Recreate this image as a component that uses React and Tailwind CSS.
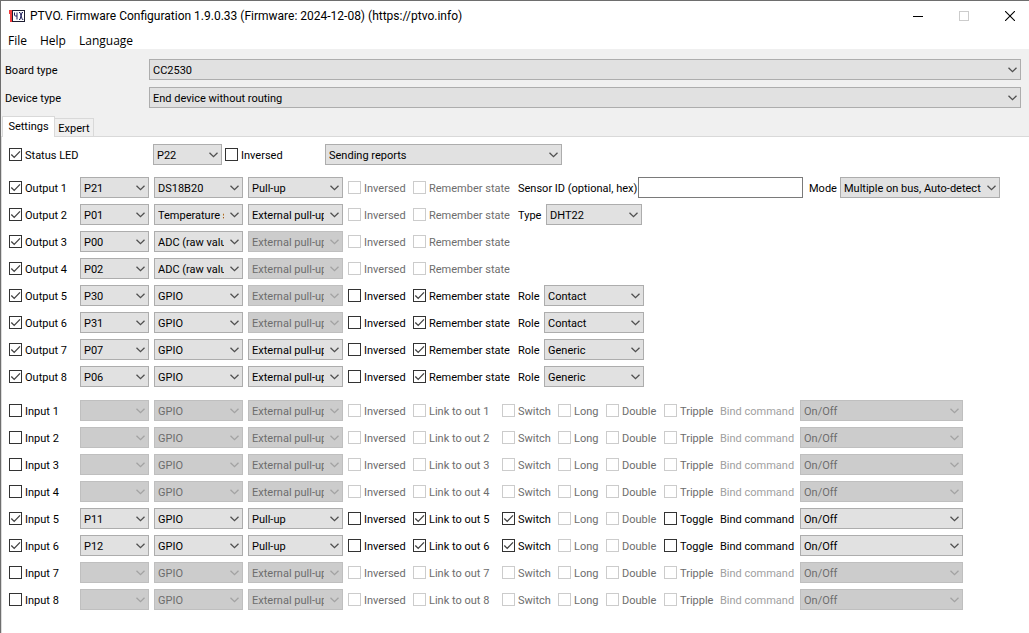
import { useId } from 'react'
import clsx from 'clsx'

const outputs = [
  { pin: 'P21', mode: 'DS18B20', pull: 'Pull-up', extra: 'sensor' },
  { pin: 'P01', mode: 'Temperature sensor', pull: 'External pull-up', extra: 'type' },
  { pin: 'P00', mode: 'ADC (raw value)', pull: 'External pull-up', pullOff: true },
  { pin: 'P02', mode: 'ADC (raw value)', pull: 'External pull-up', pullOff: true },
  { pin: 'P30', mode: 'GPIO', pull: 'External pull-up', pullOff: true, role: 'Contact' },
  { pin: 'P31', mode: 'GPIO', pull: 'External pull-up', pullOff: true, role: 'Contact' },
  { pin: 'P07', mode: 'GPIO', pull: 'External pull-up', role: 'Generic' },
  { pin: 'P06', mode: 'GPIO', pull: 'External pull-up', role: 'Generic' },
]

// pin of each input, empty when the input is off
const inputs = ['', '', '', '', 'P11', 'P12', '', '']

function Select({ value, label, id, disabled, className }) {
  return (
    <span className={clsx('relative block h-[21px] shrink-0', className)}>
      <select
        id={id}
        aria-label={label}
        disabled={disabled}
        defaultValue={value}
        className="block h-full w-full appearance-none overflow-hidden rounded-none border border-[#adadad] bg-[#e1e1e1] pt-px pr-[18px] pl-[3px] text-black opacity-100 disabled:border-[#bfbfbf] disabled:bg-[#cccccc] disabled:text-[#6d6d6d]"
      >
        <option>{value}</option>
      </select>
      <svg
        viewBox="0 0 9 6"
        className={clsx(
          'pointer-events-none absolute top-2 right-1 h-[6px] w-[9px]',
          disabled ? 'text-[#a3a3a3]' : 'text-[#505050]',
        )}
      >
        <path d="M0.5 0.7 4.5 4.7 8.5 0.7" fill="none" stroke="currentColor" strokeWidth="1.3" />
      </svg>
    </span>
  )
}

function Check({ label, checked, disabled, className }) {
  return (
    <label
      className={clsx(
        'flex shrink-0 items-center gap-[3px] whitespace-nowrap',
        disabled ? 'text-[#6d6d6d]' : 'text-black',
        className,
      )}
    >
      <span className="relative block size-[13px] shrink-0">
        <input
          type="checkbox"
          defaultChecked={checked}
          disabled={disabled}
          className="peer block size-[13px] appearance-none border border-[#333333] bg-white disabled:border-[#cccccc]"
        />
        <svg viewBox="0 0 13 13" className="pointer-events-none absolute inset-0 hidden size-[13px] peer-checked:block">
          <path d="M2.3 6.5 5.2 9.4 11 3.4" fill="none" stroke="#404040" strokeWidth="1.3" />
        </svg>
      </span>
      <span className="pt-px">{label}</span>
    </label>
  )
}

function Field({ label, value, labelWidth, width }) {
  const id = useId()
  return (
    <div className="flex items-center">
      <label htmlFor={id} className={clsx('shrink-0 pt-px whitespace-nowrap', labelWidth)}>{label}</label>
      <Select id={id} value={value} className={width} />
    </div>
  )
}

function PinSelects({ name, pin, pinOff, mode, modeOff, pull, pullOff }) {
  return (
    <div className="flex gap-[5px]">
      <Select label={`${name} pin`} value={pin} disabled={pinOff} className="w-[69px]" />
      <Select label={`${name} mode`} value={mode} disabled={modeOff} className="w-[89px]" />
      <Select label={`${name} pull`} value={pull} disabled={pullOff} className="w-[95px]" />
    </div>
  )
}

function OutputRow({ index, pin, mode, pull, pullOff, role, extra }) {
  const name = `Output ${index}`
  const sensorId = useId()
  return (
    <div className="flex h-[21px] items-center">
      <Check label={name} checked className="w-[71px]" />
      <PinSelects name={name} pin={pin} mode={mode} pull={pull} pullOff={pullOff} />
      <Check label="Inversed" disabled={!role} className="ml-[5px] w-[65px]" />
      <Check label="Remember state" checked={Boolean(role)} disabled={!role} className="w-[105px]" />
      {role && <Field label="Role" value={role} labelWidth="w-[26px]" width="w-[100px]" />}
      {extra === 'type' && <Field label="Type" value="DHT22" labelWidth="w-[28px]" width="w-[96px]" />}
      {extra === 'sensor' && (
        <>
          <label htmlFor={sensorId} className="w-[120px] shrink-0 pt-px whitespace-nowrap">
            Sensor ID (optional, hex)
          </label>
          <input
            id={sensorId}
            type="text"
            className="mr-[6px] h-[21px] w-[165px] border border-[#7a7a7a] bg-white px-1"
          />
          <Field label="Mode" value="Multiple on bus, Auto-detect" labelWidth="w-[31px]" width="w-[160px]" />
        </>
      )}
    </div>
  )
}

function InputRow({ index, pin }) {
  const name = `Input ${index}`
  const off = !pin
  const bindId = useId()
  return (
    <div className="flex h-[21px] items-center">
      <Check label={name} checked={!off} className="w-[71px]" />
      <PinSelects
        name={name}
        pin={pin}
        pinOff={off}
        mode="GPIO"
        modeOff={off}
        pull={off ? 'External pull-up' : 'Pull-up'}
        pullOff={off}
      />
      <Check label="Inversed" disabled={off} className="ml-[5px] w-[65px]" />
      <Check label={`Link to out ${index}`} checked={!off} disabled={off} className="w-[89px]" />
      <Check label="Switch" checked={!off} disabled={off} className="w-[56px]" />
      <Check label="Long" disabled className="w-[48px]" />
      <Check label="Double" disabled className="w-[58px]" />
      <Check label={off ? 'Tripple' : 'Toggle'} disabled={off} className="w-[56px]" />
      <label
        htmlFor={bindId}
        className={clsx('w-[80px] shrink-0 pt-px whitespace-nowrap', off ? 'text-[#a0a0a0]' : 'text-black')}
      >
        Bind command
      </label>
      <Select id={bindId} value="On/Off" disabled={off} className="w-[163px]" />
    </div>
  )
}

function BoardField({ label, value }) {
  const id = useId()
  return (
    <div className="flex items-center">
      <label htmlFor={id} className="w-36 shrink-0 pt-px">{label}</label>
      <Select id={id} value={value} className="min-w-0 flex-1" />
    </div>
  )
}

function Logo() {
  return (
    <svg viewBox="0 0 16 12" className="h-3 w-4 shrink-0">
      <path d="M0 0h3v12H1V4H0z" fill="#f23b3b" />
      <rect x="3.5" y="0.5" width="12" height="11" fill="#fff" stroke="#1c1c30" />
      <path
        d="M5.5 2.5v2.5q0 1 1.2 1H8M8 2.5v7M10 2.5h1l2.3 7h1M14 2.5h-1l-2 7h-1"
        fill="none"
        stroke="#1f1f5c"
      />
    </svg>
  )
}

function TitleBar() {
  return (
    <header className="flex h-[29px] items-center pl-2 text-[12px] text-black">
      <Logo />
      <h1 className="ml-[5px] flex-1 pt-px whitespace-nowrap">
        PTVO. Firmware Configuration 1.9.0.33 (Firmware: 2024-12-08) (https://ptvo.info)
      </h1>
      <div className="flex h-full gap-2">
        <button type="button" aria-label="Minimize" className="flex h-full w-[38px] items-center justify-center">
          <svg viewBox="0 0 10 10" className="size-[10px]"><path d="M0 5.5h10" stroke="#000" /></svg>
        </button>
        <button type="button" aria-label="Maximize" disabled className="flex h-full w-[38px] items-center justify-center">
          <svg viewBox="0 0 10 10" className="size-[10px]">
            <rect x="0.5" y="0.5" width="9" height="9" fill="none" stroke="#cccccc" />
          </svg>
        </button>
        <button type="button" aria-label="Close" className="flex h-full w-[38px] items-center justify-center">
          <svg viewBox="0 0 10 10" className="size-[10px]"><path d="M0 0 10 10M10 0 0 10" stroke="#000" strokeWidth="1.1" /></svg>
        </button>
      </div>
    </header>
  )
}

export default function App() {
  return (
    <div className="flex min-h-screen flex-col overflow-hidden border-t border-l border-[#6e6e6e] bg-white font-[Roboto,sans-serif] text-[11px] leading-[15px] text-black">
      <TitleBar />
      <nav className="flex h-[19px] items-center gap-[13px] pt-px pl-[7px] font-['Open_Sans',sans-serif] text-[12px]">
        <button type="button">File</button>
        <button type="button">Help</button>
        <button type="button">Language</button>
      </nav>

      <div className="bg-[#f0f0f0] pt-[10px]">
        <div className="flex flex-col gap-[7px] pr-2 pl-1">
          <BoardField label="Board type" value="CC2530" />
          <BoardField label="Device type" value="End device without routing" />
        </div>
        <div role="tablist" className="mt-2 flex items-end border-b border-[#d9d9d9] pl-px">
          <button
            type="button"
            role="tab"
            aria-selected="true"
            className="-mb-px h-[21px] w-[53px] border border-b-0 border-[#d9d9d9] bg-white pb-px"
          >
            Settings
          </button>
          <button
            type="button"
            role="tab"
            aria-selected="false"
            className="h-[18px] w-[39px] border border-b-0 border-l-0 border-[#d9d9d9] bg-[#f0f0f0] pt-px"
          >
            Expert
          </button>
        </div>
      </div>

      <main className="flex-1 border-l border-[#dcdcdc] pt-[7px] pl-[7px]">
        <div className="flex h-[21px] items-center">
          <Check label="Status LED" checked className="w-36" />
          <Select label="Status LED pin" value="P22" className="w-[69px]" />
          <Check label="Inversed" className="ml-[3px] w-[100px]" />
          <Select label="Status LED function" value="Sending reports" className="w-[237px]" />
        </div>
        <section className="mt-3 flex flex-col gap-[6px]">
          {outputs.map((output, i) => (
            <OutputRow key={i} index={i + 1} {...output} />
          ))}
        </section>
        <section className="mt-[13px] flex flex-col gap-[6px]">
          {inputs.map((pin, i) => (
            <InputRow key={i} index={i + 1} pin={pin} />
          ))}
        </section>
      </main>
    </div>
  )
}
